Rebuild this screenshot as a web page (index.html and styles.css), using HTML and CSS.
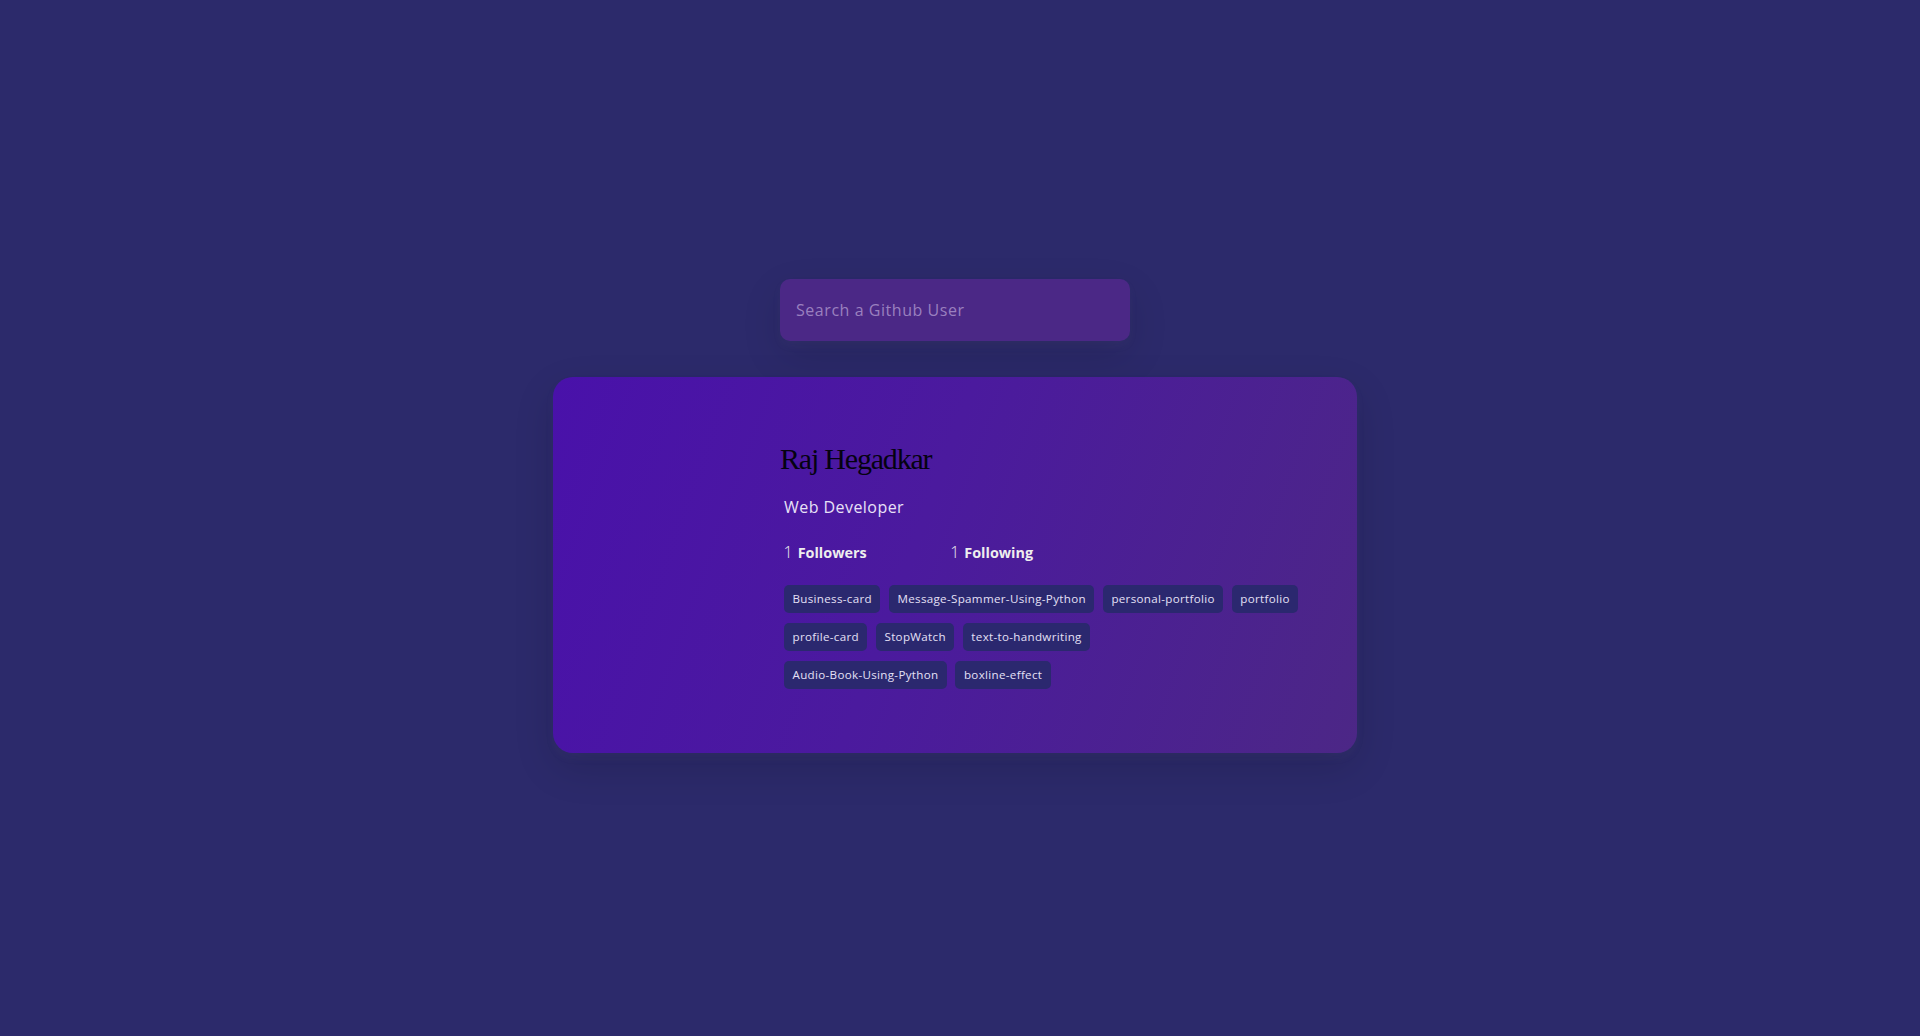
FILE: index.html
```html
<!DOCTYPE html>
<html lang="en">
<head>
<meta charset="UTF-8">
<title>Github Profiles</title>
<link rel="stylesheet" href="styles.css">
</head>
<body>
  <form class="user-form">
    <input class="search" type="text" placeholder="Search a Github User">
  </form>
  <main class="card">
    <div class="avatar"></div>
    <div class="user-info">
      <h2 class="name">Raj Hegadkar</h2>
      <p class="bio">Web Developer</p>
      <ul class="stats">
        <li class="stat"><span class="num">1</span><strong>Followers</strong></li>
        <li class="stat"><span class="num">1</span><strong>Following</strong></li>
      </ul>
      <div class="repos">
        <div class="repo-row">
          <a class="repo" href="#">Business-card</a>
          <a class="repo" href="#">Message-Spammer-Using-Python</a>
          <a class="repo" href="#">personal-portfolio</a>
          <a class="repo" href="#">portfolio</a>
        </div>
        <div class="repo-row">
          <a class="repo" href="#">profile-card</a>
          <a class="repo" href="#">StopWatch</a>
          <a class="repo" href="#">text-to-handwriting</a>
        </div>
        <div class="repo-row">
          <a class="repo" href="#">Audio-Book-Using-Python</a>
          <a class="repo" href="#">boxline-effect</a>
        </div>
      </div>
    </div>
  </main>
</body>
</html>
```
FILE: styles.css
```css
* {
  box-sizing: border-box;
}

html, body {
  margin: 0;
  height: 100%;
}

body {
  background-color: #2c2a6b;
  color: #fff;
  font-family: "Open Sans", "Liberation Sans", sans-serif;
  display: flex;
  flex-direction: column;
  align-items: center;
  justify-content: center;
  padding: 0 10px 5px 0;
  overflow: hidden;
}

.user-form {
  width: 350px;
  margin: 0 0 36px 0;
}

.search {
  display: block;
  width: 100%;
  height: 62px;
  background-color: #4b2886;
  border: none;
  border-radius: 10px;
  color: #fff;
  padding: 0 16px;
  font-family: inherit;
  font-size: 16px;
  outline: none;
  box-shadow: 0 5px 10px rgba(154, 160, 185, 0.05), 0 15px 40px rgba(0, 0, 0, 0.12);
}

.search::placeholder {
  color: #9a80bf;
  letter-spacing: 0.55px;
}

.card {
  width: 804px;
  display: flex;
  padding: 48px;
  border-radius: 20px;
  background: linear-gradient(110deg, #4911aa 0%, #4b1a9e 45%, #4c2786 100%);
  box-shadow: 0 5px 10px rgba(154, 160, 185, 0.05), 0 15px 40px rgba(0, 0, 0, 0.14);
}

.avatar {
  flex: 0 0 147px;
  margin-right: 32px;
}

.user-info {
  flex: 1;
  color: #eee;
  padding-bottom: 16px;
}

.name {
  margin: 16px 0 0 0;
  font-family: "Liberation Serif", "Times New Roman", serif;
  font-weight: normal;
  font-size: 30px;
  line-height: 36px;
  letter-spacing: -1.2px;
  color: #050211;
}

.bio {
  margin: 18px 0 0 0;
  padding-left: 4px;
  font-size: 16px;
  line-height: 24px;
  letter-spacing: 0.45px;
  color: #e8e1f7;
}

.stats {
  list-style: none;
  margin: 23px 0 0 0;
  padding: 0;
  display: flex;
  gap: 80px;
  line-height: 20px;
}

.stat {
  display: flex;
  align-items: baseline;
}

.num {
  font-size: 16px;
  font-weight: 300;
  padding-left: 3.5px;
}

.stat strong {
  font-size: 14.4px;
  font-weight: 700;
  margin-left: 5px;
  color: #eee;
}

.repos {
  margin-top: 22px;
  padding-left: 4px;
  display: flex;
  flex-direction: column;
  gap: 10px;
}

.repo-row {
  display: flex;
  gap: 8.5px;
}

.repo {
  display: block;
  height: 28px;
  line-height: 28px;
  padding: 0 8.5px;
  border-radius: 5px;
  background-color: #2b286f;
  color: #e4e0f6;
  font-size: 11.6px;
  letter-spacing: 0.32px;
  text-decoration: none;
}
```
